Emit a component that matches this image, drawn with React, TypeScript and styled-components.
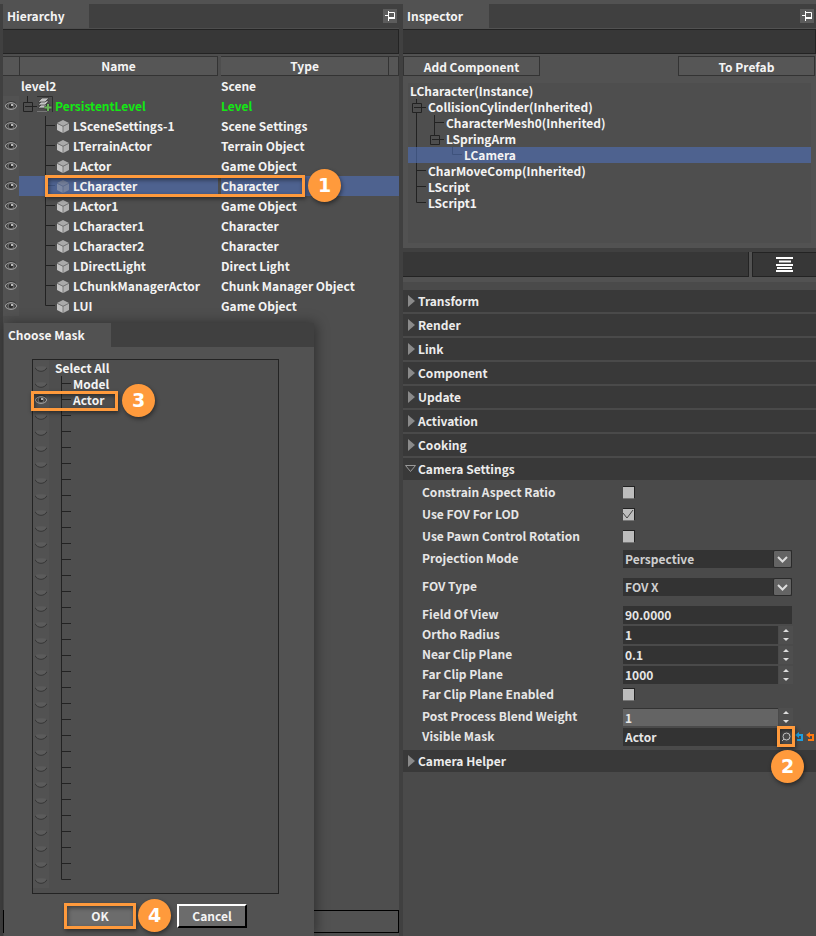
import React from "react";
import styled, { createGlobalStyle, css } from "styled-components";

const Global = createGlobalStyle`
  * { box-sizing: border-box; }
  body {
    margin: 0;
    background: #4b4b4b;
    color: #f4f4f4;
    font: 700 12px/16px "Noto Sans CJK SC", sans-serif;
  }
  button, input, select { font: inherit; color: inherit; margin: 0; padding: 0; border: 0; border-radius: 0; }
  svg { display: block; flex: none; }
  h2, h3 { margin: 0; font: inherit; }
  ul { margin: 0; padding: 0; list-style: none; }
`;

const Page = styled.main`
  min-height: 100vh;
  display: grid;
  grid-template-columns: 396fr 413fr;
  column-gap: 4px;
  padding-left: 3px;
  border-top: 4px solid #525252;
  background: #404040;
`;

const Panel = styled.section<{ $shade: string }>`
  position: relative;
  min-width: 0;
  display: flex;
  flex-direction: column;
  background: ${(p) => p.$shade};
`;

const TabBar = styled.header`
  display: flex;
  justify-content: space-between;
  align-items: center;
  height: 24px;
  flex: none;
  padding-right: 2px;
  background: #404040;
`;

const Tab = styled.h2<{ $width: number }>`
  width: ${(p) => p.$width}px;
  height: 24px;
  padding-left: 4px;
  line-height: 23px;
  background: #525252;
`;

const PinButton = styled.button`
  width: 14px;
  height: 14px;
  background: #5c5c5c;
`;

const Strip = styled.div`
  height: 25px;
  flex: none;
  margin: 1px 0 2px;
  background: #373737;
  border: solid #232323;
  border-width: 1px 1px 1px 0;
`;

const Tree = styled.table`
  width: 100%;
  table-layout: fixed;
  border-collapse: separate;
  border-spacing: 0;
  th, td { padding: 0; font-weight: inherit; text-align: left; white-space: nowrap; height: 20px; }
`;

const HeadBox = styled.div<{ $gap?: boolean }>`
  height: 20px;
  margin-right: ${(p) => (p.$gap ? 3 : 0)}px;
  border: 1px solid #333;
  border-left: 0;
  background: #565656;
  text-align: center;
  line-height: 18px;
`;

const EyeCell = styled.td`
  background: linear-gradient(to right, #525252 16px, transparent 16px);
  svg { margin-left: 2px; }
`;

const picked = css`background: #4e628f;`;

const NameBox = styled.div<{ $on?: boolean; $indent: number }>`
  position: relative;
  display: flex;
  align-items: center;
  height: 20px;
  margin: 0 3px 0 -1px;
  padding-left: ${(p) => p.$indent}px;
  ${(p) => p.$on && picked}
`;

const TypeCell = styled.td<{ $on?: boolean }>`
  ${(p) => p.$on && picked}
`;

const Label = styled.span<{ $green?: boolean; $gap?: number }>`
  margin-left: ${(p) => p.$gap ?? 0}px;
  white-space: nowrap;
  ${(p) => p.$green && "color: #13e813;"}
`;

const LevelSlot = styled.span`
  margin: -4px 2px 0 -4px;
`;

const Footer = styled.div`
  height: 23px;
  margin: auto 0 3px;
  background: #525252;
  border: 1px solid #000;
`;

const Frame = styled.div<{ $box: string; $width?: number }>`
  position: absolute;
  inset: ${(p) => p.$box};
  ${(p) => p.$width && `width: ${p.$width}px;`}
  border: 3px solid #ff9a3c;
  box-shadow: 1px 2px 4px rgba(0, 0, 0, 0.45), inset 1px 2px 4px rgba(0, 0, 0, 0.45);
  pointer-events: none;
  z-index: 2;
`;

const Badge = styled.span<{ $left: number; $top: number }>`
  position: absolute;
  left: ${(p) => p.$left}px;
  top: ${(p) => p.$top}px;
  width: 33px;
  height: 33px;
  border-radius: 50%;
  background: #ff9a3c;
  box-shadow: 1px 2px 4px rgba(0, 0, 0, 0.45);
  color: #fff;
  font: 700 19px/33px "DejaVu Sans", sans-serif;
  text-align: center;
  z-index: 3;
`;

const Dialog = styled.section`
  position: absolute;
  left: 1px;
  top: 319px;
  bottom: 0;
  width: 310px;
  background: #525252;
  box-shadow: 2px 0 12px rgba(0, 0, 0, 0.4);
`;

const MaskList = styled.ul`
  width: 247px;
  margin: 12px 0 0 28px;
  padding-bottom: 5px;
  border: 1px solid #232323;
  background: #4e4e4e;
`;

const MaskRow = styled.li`
  position: relative;
  display: flex;
  align-items: center;
  height: 16px;
`;

const MaskEye = styled.span`
  width: 28px;
  height: 16px;
  padding: 3px 0 0 2px;
  background: linear-gradient(to right, #525252 16px, transparent 16px);
`;

const Actions = styled.div`
  display: flex;
  gap: 44px;
  padding: 10px 0 0 63px;
`;

const ActionWrap = styled.div`
  position: relative;
  display: flex;
`;

const ActionButton = styled.button<{ $raised?: boolean }>`
  width: ${(p) => (p.$raised ? 70 : 66)}px;
  height: 24px;
  background: #6c6c6c;
  line-height: 20px;
  ${(p) => p.$raised && "border: 2px solid; border-color: #fff #000 #000 #fff;"}
`;

const ButtonRow = styled.div`
  display: flex;
  justify-content: space-between;
  padding-right: 1px;
`;

const WideButton = styled.button`
  width: 137px;
  height: 20px;
  border: 1px solid #333;
  background: #565656;
  line-height: 17px;
`;

const ComponentTree = styled.ul`
  height: 160px;
  margin: 7px 5px 5px;
  background: #4e4e4e;
`;

const ComponentRow = styled.li<{ $on?: boolean; $indent: number }>`
  display: flex;
  align-items: center;
  height: 16px;
  padding-left: ${(p) => p.$indent}px;
  ${(p) => p.$on && picked}
`;

const FilterRow = styled.div`
  display: flex;
  gap: 3px;
  height: 29px;
  border-top: 4px solid #404040;
`;

const FilterInput = styled.input`
  flex: 1;
  min-width: 0;
  background: #373737;
  border: solid #232323;
  border-width: 0 1px 1px 0;
`;

const FilterButton = styled.button`
  display: grid;
  place-items: center;
  width: 64px;
  background: #373737;
  border: solid #232323;
  border-width: 1px 0 1px 1px;
`;

const Properties = styled.div`
  flex: 1;
  margin-top: 5px;
  padding-top: 8px;
  background: #4a4a4a;
`;

const SectionHead = styled.h3`
  display: flex;
  height: 22px;
  margin-bottom: 2px;
  background: #393939;
`;

const SectionButton = styled.button`
  display: flex;
  align-items: center;
  flex: 1;
  padding-bottom: 1px;
  background: none;
  color: #ececec;
`;

const TriangleSlot = styled.span<{ $open?: boolean }>`
  width: 15px;
  padding-left: ${(p) => (p.$open ? 2 : 5)}px;
`;

const Fields = styled.div`
  padding: 2px 0;
`;

const Field = styled.div<{ $kind: Kind }>`
  display: grid;
  grid-template-columns: 201px 1fr;
  align-items: start;
  height: ${(p) => (p.$kind === "check" ? 16 : 18)}px;
  margin: 0 0 ${(p) => ({ check: 6, select: 10, text: 2, number: 2, mask: 2 })[p.$kind]}px 19px;
  color: #e6e6e6;
`;

const Control = styled.div<{ $kind: Kind }>`
  position: relative;
  display: flex;
  align-items: center;
  height: ${(p) => (p.$kind === "check" ? 16 : 18)}px;
`;

const Check = styled.input`
  appearance: none;
  width: 12px;
  height: 13px;
  background: #bdbdbd;
  border: solid #222;
  border-width: 1px 1px 0 0;
  border-bottom: 1px solid #777;
  &:checked {
    background: #bdbdbd url("data:image/svg+xml,%3Csvg xmlns='http://www.w3.org/2000/svg' width='11' height='11'%3E%3Cpath d='M0 4L4 9L10 1' fill='none' stroke='%23444'/%3E%3C/svg%3E") no-repeat;
  }
`;

const TextInput = styled.input<{ $width: number; $light?: boolean }>`
  width: ${(p) => p.$width}px;
  height: 18px;
  padding: 0 2px 1px;
  background: ${(p) => (p.$light ? "#646464" : "#333")};
  ${(p) => p.$light && "border-top: 1px solid #333;"}
`;

const Picker = styled.select`
  appearance: none;
  width: 169px;
  height: 18px;
  padding: 0 22px 1px 2px;
  background: #333;
  color: #cfcfcf;
`;

const PickerArrow = styled.span`
  position: absolute;
  left: 150px;
  top: 0;
  display: grid;
  place-items: center;
  width: 19px;
  height: 18px;
  background: #646464;
  border: 1px solid #2a2a2a;
  border-radius: 2px;
  pointer-events: none;
`;

const Spinner = styled.div`
  display: flex;
  flex-direction: column;
  margin-left: 1px;
`;

const SpinButton = styled.button`
  display: grid;
  place-items: center;
  width: 14px;
  height: 9px;
  background: #4e4e4e;
`;

const IconButton = styled.button<{ $width: number }>`
  display: grid;
  place-items: center;
  width: ${(p) => p.$width}px;
  height: 18px;
  background: none;
`;

type Kind = "check" | "select" | "text" | "number" | "mask";

const Pin = () => (
  <svg width="14" height="14" fill="none" stroke="#fff">
    <path d="M2 6.500H5M5.500 2V12M6 3.500H11.500V9" />
    <path d="M6 9H12" strokeWidth="2" />
  </svg>
);

const Eye = () => (
  <svg width="12" height="10" viewBox="0 0 12 10">
    <path d="M0 5C2 .5 10 .5 12 5C10 9.500 2 9.500 0 5Z" fill="#4a4a4a" stroke="#a9a9a9" />
    <path d="M1 2.500C3 -.2 9 -.2 11 2.500" fill="none" stroke="#3a3a3a" />
    <circle cx="6" cy="5" r="2.800" fill="#2c2c2c" stroke="#868686" strokeWidth=".7" />
    <circle cx="7" cy="4" r="1.100" fill="#dedede" />
  </svg>
);

const ClosedEye = () => (
  <svg width="12" height="10" viewBox="0 0 12 10">
    <path d="M0 4C3 3 9 3 12 4C10 9.500 2 9.500 0 4Z" fill="#5b5b5b" />
    <path d="M0 4.500C2 9.600 10 9.600 12 4.500" fill="none" stroke="#363636" />
  </svg>
);

const Cube = ({ faded }: { faded?: boolean }) => (
  <svg width="12" height="13" viewBox="0 0 12 13" opacity={faded ? 0.4 : 1}>
    <path d="M6 0L12 3L6 6L0 3Z" fill="#aaa" />
    <path d="M0 3.600L5.800 6.500V13L0 10Z" fill="#c2c2c2" />
    <path d="M12 3.600L6.200 6.500V13L12 10Z" fill="#b0b0b0" />
    <path d="M0 3.200L6 6.300L12 3.200M6 6V13" fill="none" stroke="#7c7c7c" strokeWidth=".5" />
  </svg>
);

const LevelIcon = () => (
  <svg width="16" height="16" viewBox="0 0 16 16">
    <path d="M0 .5H15.500V16" fill="none" stroke="#2e2e2e" />
    <path d="M0 15.500H10" stroke="#777" />
    <g fill="#c2c2c2" stroke="#383838" strokeWidth=".7">
      <path d="M1 12L5 8H12L8 12Z" />
      <path d="M1 9L5 5H12L8 9Z" />
      <path d="M1 6L5 2H12L8 6Z" />
    </g>
    <path d="M11 8V15M7.500 11.500H14.500" stroke="#3c3c3c" strokeWidth="4" />
    <path d="M11 8V15M7.500 11.500H14.500" stroke="#68b558" strokeWidth="2" />
  </svg>
);

type BranchKind = "mid" | "last" | "pass";

const Branch = ({ kind, h, w = 18, faded }: { kind: BranchKind; h: number; w?: number; faded?: boolean }) => {
  const m = h / 2 - 0.5;
  const paths = { mid: `M.5 0V${h}M0 ${m}H10`, last: `M.5 0V${m}H10`, pass: `M.5 0V${h}` };
  return (
    <svg width={w} height={h} fill="none" stroke={faded ? "#3e527c" : "#222"}>
      <path d={paths[kind]} />
    </svg>
  );
};

const Expander = ({ h, tail }: { h: number; tail?: boolean }) => {
  const m = h / 2 + 0.5;
  return (
    <svg width="18" height={h} fill="none" stroke="#222">
      <path d={`M.5 ${m - 4}H9.500V${m + 5}H.5ZM2 ${m}H14M4.500 0V${m - 4}${tail ? `M4.500 ${m + 5}V${h}` : ""}`} />
    </svg>
  );
};

const actors: [string, string][] = [
  ["LSceneSettings-1", "Scene Settings"],
  ["LTerrainActor", "Terrain Object"],
  ["LActor", "Game Object"],
  ["LCharacter", "Character"],
  ["LActor1", "Game Object"],
  ["LCharacter1", "Character"],
  ["LCharacter2", "Character"],
  ["LDirectLight", "Direct Light"],
  ["LChunkManagerActor", "Chunk Manager Object"],
  ["LUI", "Game Object"],
];

const masks = ["Model", "Actor", ...Array<string>(30).fill("")];

const Hierarchy = () => (
  <Tree>
    <colgroup>
      <col width="17" />
      <col />
      <col width="168" />
      <col width="10" />
    </colgroup>
    <thead>
      <tr>
        <th><HeadBox>&nbsp;</HeadBox></th>
        <th><HeadBox $gap>Name</HeadBox></th>
        <th><HeadBox>Type</HeadBox></th>
        <th><HeadBox>&nbsp;</HeadBox></th>
      </tr>
    </thead>
    <tbody>
      <tr>
        <td />
        <td><NameBox $indent={2}>level2</NameBox></td>
        <td colSpan={2}>Scene</td>
      </tr>
      <tr>
        <EyeCell><Eye /></EyeCell>
        <td>
          <NameBox $indent={4}>
            <Expander h={20} />
            <LevelSlot><LevelIcon /></LevelSlot>
            <Label $green>PersistentLevel</Label>
          </NameBox>
        </td>
        <td colSpan={2}><Label $green>Level</Label></td>
      </tr>
      {actors.map(([name, type], i) => {
        const on = name === "LCharacter";
        return (
          <tr key={name}>
            <EyeCell><Eye /></EyeCell>
            <td>
              <NameBox $indent={26} $on={on}>
                <Branch kind={i === actors.length - 1 ? "last" : "mid"} h={20} w={12} faded={on} />
                <Cube faded={on} />
                <Label $gap={4}>{name}</Label>
                {on && (
                  <>
                    <Frame $box="-1px -87px -1px 26px" />
                    <Badge $left={289} $top={-7}>1</Badge>
                  </>
                )}
              </NameBox>
            </td>
            <TypeCell colSpan={2} $on={on}>{type}</TypeCell>
          </tr>
        );
      })}
    </tbody>
  </Tree>
);

const MaskDialog = () => (
  <Dialog role="dialog" aria-label="Choose Mask">
    <TabBar><Tab $width={107}>Choose Mask</Tab></TabBar>
    <MaskList>
      <MaskRow>
        <MaskEye><ClosedEye /></MaskEye>
        <Label $gap={-6}>Select All</Label>
      </MaskRow>
      {masks.map((name, i) => (
        <MaskRow key={i}>
          <MaskEye>{name === "Actor" ? <Eye /> : <ClosedEye />}</MaskEye>
          <Branch kind={i === masks.length - 1 ? "last" : "mid"} h={16} w={12} />
          <Label>{name}</Label>
          {name === "Actor" && (
            <>
              <Frame $box="-1px 160px -3px -2px" />
              <Badge $left={89} $top={-8}>3</Badge>
            </>
          )}
        </MaskRow>
      ))}
    </MaskList>
    <Actions>
      <ActionWrap>
        <ActionButton>OK</ActionButton>
        <Frame $box="-1px -3px -1px -3px" />
        <Badge $left={71} $top={-5}>4</Badge>
      </ActionWrap>
      <ActionButton $raised>Cancel</ActionButton>
    </Actions>
  </Dialog>
);

const Section = ({ title, open }: { title: string; open?: boolean }) => (
  <SectionHead>
    <SectionButton aria-expanded={!!open}>
      <TriangleSlot $open={open}>
        {open ? (
          <svg width="11" height="8" fill="none" stroke="#999"><path d="M.5 .5H10.500L5.500 6.500Z" /></svg>
        ) : (
          <svg width="7" height="12"><path d="M0 0L7 6L0 12Z" fill="#8a8a8a" /></svg>
        )}
      </TriangleSlot>
      {title}
    </SectionButton>
  </SectionHead>
);

const Undo = ({ color }: { color: string }) => (
  <svg width="9" height="10" fill="none" stroke={color} strokeWidth="2">
    <path d="M3 3H7V8H2" />
    <path d="M4 0V6L0 3Z" fill={color} stroke="none" />
  </svg>
);

const fields: { label: string; kind: Kind; value?: string; light?: boolean; checked?: boolean }[] = [
  { label: "Constrain Aspect Ratio", kind: "check" },
  { label: "Use FOV For LOD", kind: "check", checked: true },
  { label: "Use Pawn Control Rotation", kind: "check" },
  { label: "Projection Mode", kind: "select", value: "Perspective" },
  { label: "FOV Type", kind: "select", value: "FOV X" },
  { label: "Field Of View", kind: "text", value: "90.0000" },
  { label: "Ortho Radius", kind: "number", value: "1" },
  { label: "Near Clip Plane", kind: "number", value: "0.1" },
  { label: "Far Clip Plane", kind: "number", value: "1000" },
  { label: "Far Clip Plane Enabled", kind: "check" },
  { label: "Post Process Blend Weight", kind: "number", value: "1", light: true },
  { label: "Visible Mask", kind: "mask", value: "Actor" },
];

const FieldRow = ({ label, kind, value, light, checked }: (typeof fields)[number]) => {
  const id = label.toLowerCase().replace(/ /g, "-");
  return (
    <Field $kind={kind}>
      <label htmlFor={id}>{label}</label>
      <Control $kind={kind}>
        {kind === "check" && <Check id={id} type="checkbox" defaultChecked={checked} />}
        {kind === "select" && (
          <>
            <Picker id={id} defaultValue={value}><option>{value}</option></Picker>
            <PickerArrow>
              <svg width="11" height="7" fill="none" stroke="#ddd" strokeWidth="2"><path d="M1 1L5.500 5.500L10 1" /></svg>
            </PickerArrow>
          </>
        )}
        {(kind === "text" || kind === "number" || kind === "mask") && (
          <TextInput id={id} $width={kind === "text" ? 169 : 155} $light={light} defaultValue={value} />
        )}
        {kind === "number" && (
          <Spinner>
            <SpinButton aria-label={`Increase ${label}`}><svg width="6" height="3"><path d="M0 3L3 0L6 3Z" fill="#ddd" /></svg></SpinButton>
            <SpinButton aria-label={`Decrease ${label}`}><svg width="6" height="3"><path d="M0 0L3 3L6 0Z" fill="#ddd" /></svg></SpinButton>
          </Spinner>
        )}
        {kind === "mask" && (
          <>
            <IconButton $width={16} aria-label="Choose mask">
              <svg width="10" height="10" fill="none" stroke="#ccc"><circle cx="5.500" cy="4.500" r="3.500" /><path d="M3 7L1 9" /></svg>
            </IconButton>
            <IconButton $width={10} aria-label="Undo"><Undo color="#1d9fe0" /></IconButton>
            <IconButton $width={12} aria-label="Reset"><Undo color="#ff7a10" /></IconButton>
            <Frame $box="-2px auto -1px 154px" $width={18} />
            <Badge $left={148} $top={22}>2</Badge>
          </>
        )}
      </Control>
    </Field>
  );
};

const InspectorTree = () => (
  <ComponentTree>
    <ComponentRow $indent={2}>LCharacter(Instance)</ComponentRow>
    <ComponentRow $indent={4}><Expander h={16} tail /><Label $gap={-2}>CollisionCylinder(Inherited)</Label></ComponentRow>
    <ComponentRow $indent={8}><Branch kind="pass" h={16} /><Branch kind="mid" h={16} w={12} /><Label>CharacterMesh0(Inherited)</Label></ComponentRow>
    <ComponentRow $indent={8}><Branch kind="pass" h={16} w={14} /><Expander h={16} /><Label $gap={-2}>LSpringArm</Label></ComponentRow>
    <ComponentRow $indent={8} $on><Branch kind="pass" h={16} w={36} faded /><Branch kind="last" h={16} w={12} faded /><Label>LCamera</Label></ComponentRow>
    {["CharMoveComp(Inherited)", "LScript", "LScript1"].map((name, i) => (
      <ComponentRow key={name} $indent={8}><Branch kind={i === 2 ? "last" : "mid"} h={16} w={12} /><Label>{name}</Label></ComponentRow>
    ))}
  </ComponentTree>
);

export default function App() {
  return (
    <>
      <Global />
      <Page>
        <Panel $shade="#4e4e4e">
          <TabBar><Tab $width={86}>Hierarchy</Tab><PinButton aria-label="Pin hierarchy"><Pin /></PinButton></TabBar>
          <Strip />
          <Hierarchy />
          <Footer />
          <MaskDialog />
        </Panel>
        <Panel $shade="#525252">
          <TabBar><Tab $width={86}>Inspector</Tab><PinButton aria-label="Pin inspector"><Pin /></PinButton></TabBar>
          <Strip />
          <ButtonRow>
            <WideButton>Add Component</WideButton>
            <WideButton>To Prefab</WideButton>
          </ButtonRow>
          <InspectorTree />
          <FilterRow>
            <FilterInput aria-label="Filter properties" />
            <FilterButton aria-label="Property list">
              <svg width="18" height="15" stroke="#fff" strokeWidth="2"><path d="M0 1H17M3 4.500H15M0 8H17M1 11H16M0 14H17" /></svg>
            </FilterButton>
          </FilterRow>
          <Properties>
            {["Transform", "Render", "Link", "Component", "Update", "Activation", "Cooking"].map((t) => <Section key={t} title={t} />)}
            <Section title="Camera Settings" open />
            <Fields>{fields.map((f) => <FieldRow key={f.label} {...f} />)}</Fields>
            <Section title="Camera Helper" />
          </Properties>
        </Panel>
      </Page>
    </>
  );
}
